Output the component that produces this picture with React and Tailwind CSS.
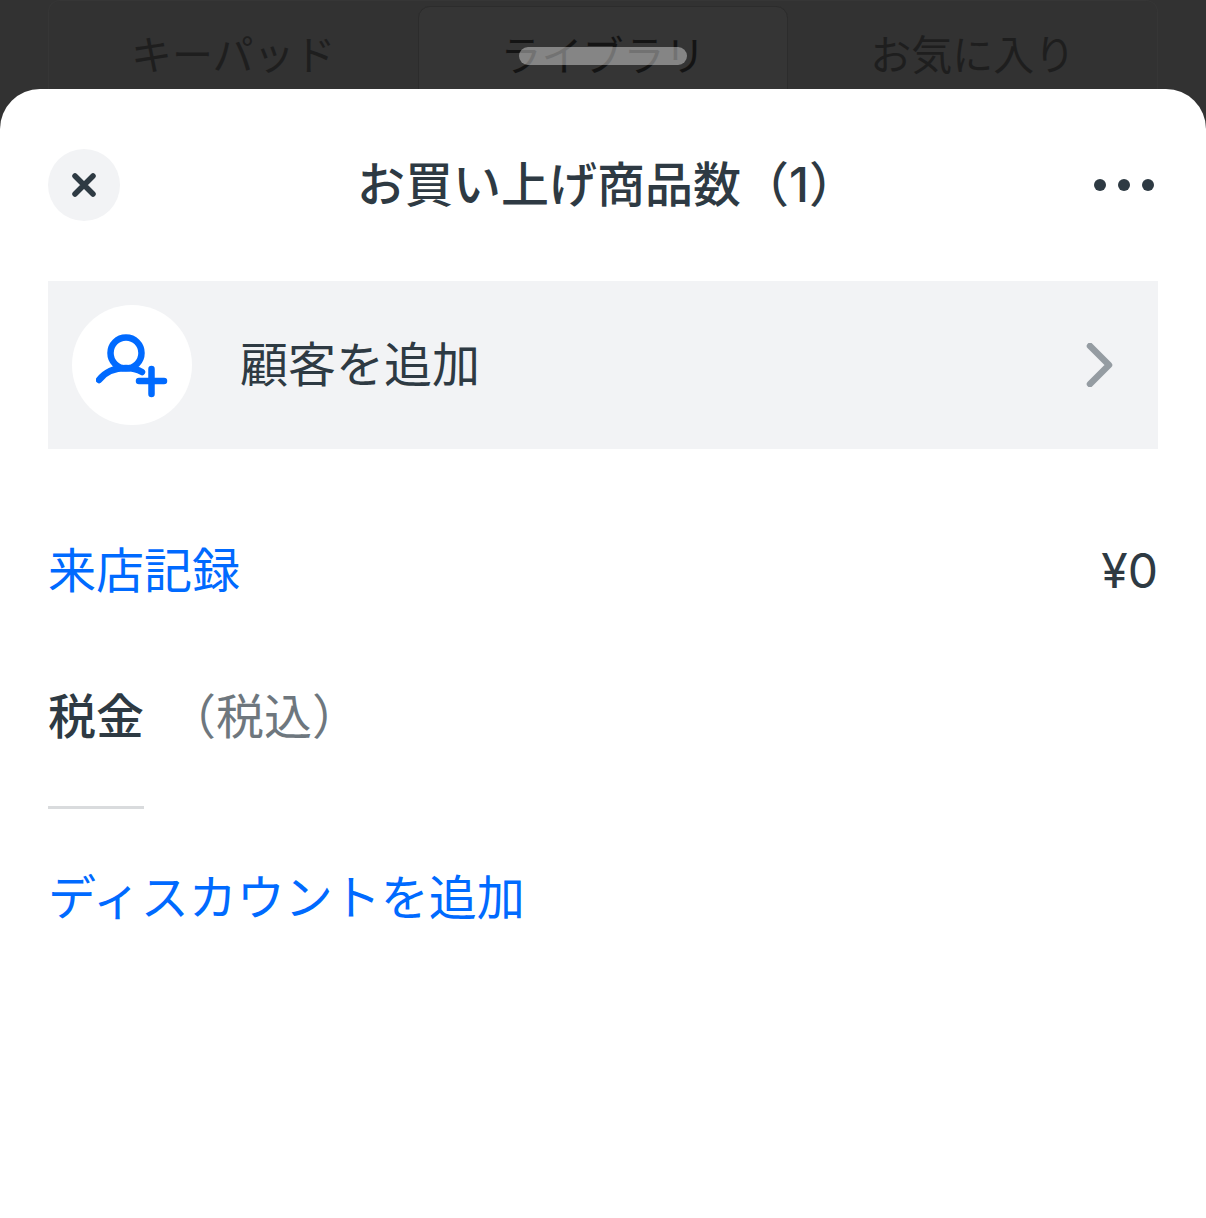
import React from "react";

const FONT = "font-['Inter','Noto_Sans_CJK_JP',sans-serif]";

const TABS = [
  { label: "キーパッド", active: false },
  { label: "ライブラリ", active: true },
  { label: "お気に入り", active: false },
];

const CloseIcon = () => (
  <svg width="24" height="24" viewBox="0 0 24 24" fill="none">
    <path d="M3 3L21 21M21 3L3 21" stroke="#2e3a43" strokeWidth="5.5" strokeLinecap="round" />
  </svg>
);

const CustomerAddIcon = () => (
  <svg width="72" height="68" viewBox="0 0 72 68" fill="none" stroke="#006aff" strokeWidth="6.5" strokeLinecap="round" strokeLinejoin="round">
    <circle cx="30" cy="22" r="15.5" />
    <path d="M3 49C9 41 19 37 30 37C36 37 41 38 46 41" />
    <path d="M43 50H68M55.5 38V63" />
  </svg>
);

const Chevron = () => (
  <svg width="28" height="44" viewBox="0 0 28 44" fill="none">
    <path d="M4 3L23 22L4 41" stroke="#959ca2" strokeWidth="6.5" strokeLinecap="round" strokeLinejoin="round" />
  </svg>
);

const App = () => {
  return (
    <div className={`relative h-[1218px] w-[1206px] overflow-hidden bg-[#323232] ${FONT}`}>
      <div className="mx-[48px] flex h-[89px] overflow-hidden rounded-t-[12px] border border-b-0 border-[#363636] pt-[5px]">
        {TABS.map((tab) => (
          <div
            key={tab.label}
            className={
              tab.active
                ? "flex h-[90px] flex-1 items-start justify-center rounded-t-[12px] border border-[#2c2c2c] bg-[#353535] pt-[20px] text-[41px] leading-[58px] text-[#141414]"
                : "flex h-[90px] flex-1 items-start justify-center pt-[20px] text-[41px] leading-[58px] text-[#1e1e1e]"
            }
          >
            {tab.label}
          </div>
        ))}
      </div>
      <div className="absolute left-[519px] top-[47px] h-[18px] w-[168px] rounded-[9px] bg-[#ffffff]/40" />

      <div className="h-[1129px] rounded-t-[40px] bg-white px-[48px] pt-[60px]">
        <div className="flex h-[72px] items-center justify-between">
          <button className="flex h-[72px] w-[72px] items-center justify-center rounded-full bg-[#f2f3f5]">
            <CloseIcon />
          </button>
          <h1 className="text-[48px] font-medium leading-[72px] text-[#2e3a43]">お買い上げ商品数（1）</h1>
          <div className="flex items-center gap-[12px] pr-[4px]">
            <span className="h-[12px] w-[12px] rounded-full bg-[#2e3a43]" />
            <span className="h-[12px] w-[12px] rounded-full bg-[#2e3a43]" />
            <span className="h-[12px] w-[12px] rounded-full bg-[#2e3a43]" />
          </div>
        </div>

        <div className="mt-[60px] flex h-[168px] items-center bg-[#f2f3f5] pl-[24px] pr-[44px]">
          <div className="flex h-[120px] w-[120px] items-center justify-center rounded-full bg-white">
            <CustomerAddIcon />
          </div>
          <span className="ml-[48px] flex-1 text-[48px] leading-[72px] text-[#2e3a43]">顧客を追加</span>
          <Chevron />
        </div>

        <div className="mt-[86px] flex h-[72px] items-center justify-between text-[48px]">
          <span className="text-[#006aff]">来店記録</span>
          <span className="text-[#2e3a43]">¥0</span>
        </div>

        <div className="mt-[74px] flex h-[72px] items-center text-[48px]">
          <span className="font-medium text-[#2e3a43]">税金</span>
          <span className="ml-[24px] text-[#6e777e]">（税込）</span>
        </div>

        <div className="mt-[53px] h-[3px] w-[96px] bg-[#d9dbdd]" />

        <div className="mt-[53px] text-[48px] leading-[72px] text-[#006aff]">ディスカウントを追加</div>
      </div>
    </div>
  );
};

export default App;
